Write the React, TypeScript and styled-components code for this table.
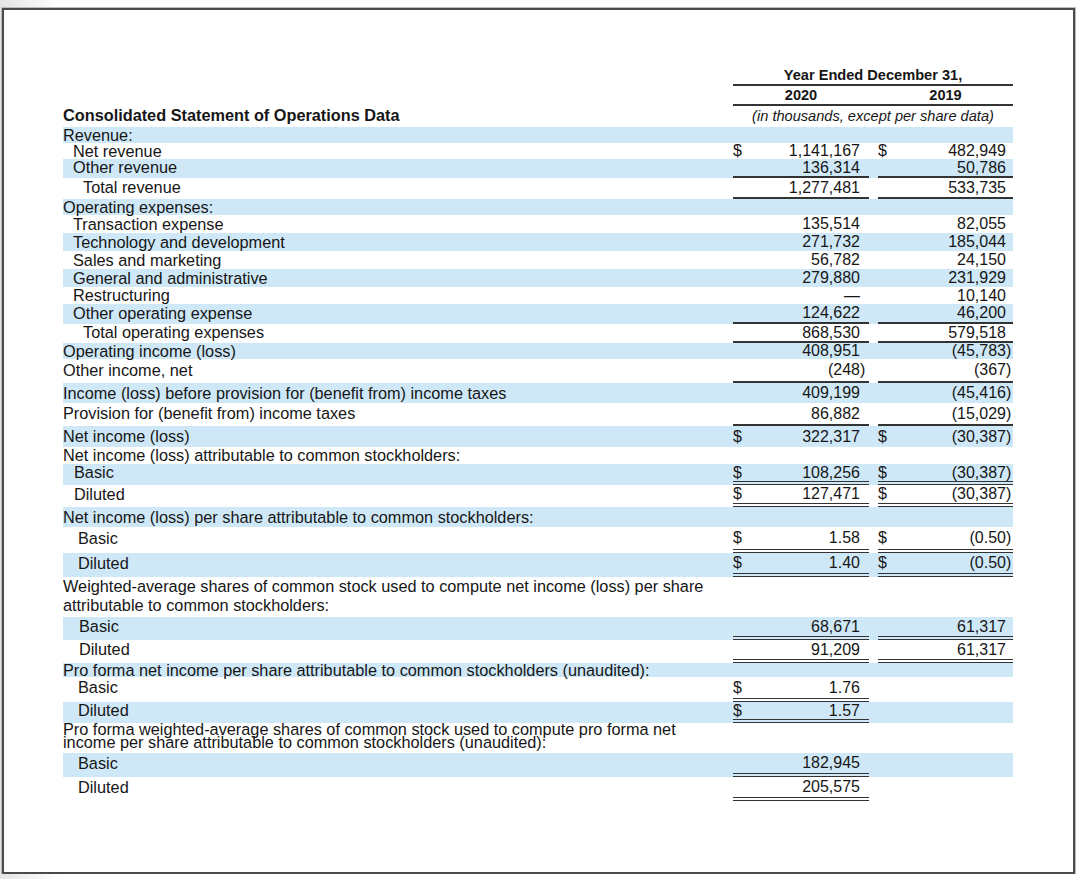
import React from "react";
import styled, { createGlobalStyle } from "styled-components";

const GlobalStyle = createGlobalStyle`
  html, body {
    margin: 0;
    padding: 0;
  }
  body {
    background: linear-gradient(to right, #e4e4e4 0px, #ffffff 60px);
    font-family: "Liberation Sans", Arial, sans-serif;
    color: #161616;
  }
`;

type Rule = "none" | "single" | "double";
type Cell = { v: string; neg?: boolean; dollar?: boolean };
type RowData = {
  label: string[];
  indent: number;
  h: number;
  lh?: number;
  rule?: Rule;
  a?: Cell;
  b?: Cell;
};

const COLS = "661px 136px 135px";
const BLUE = "#cfe8f8";
const RULE_COLOR = "#333";

const Frame = styled.div`
  box-sizing: border-box;
  width: 1073px;
  height: 866px;
  margin: 8px 0 0 2px;
  border: 2px solid #4a4a4a;
  box-shadow: 0 0 0 1px #bdbdbd;
  background: #fff;
  padding: 57px 0 0 59px;
`;

const Header = styled.div`
  display: grid;
  grid-template-columns: ${COLS};
  column-gap: 9px;
  width: 950px;
`;

const YearEnded = styled.div`
  grid-column: 2 / 4;
  grid-row: 1;
  text-align: center;
  font-weight: 700;
  font-size: 14.6px;
  line-height: 17px;
  border-bottom: 2px solid ${RULE_COLOR};
`;

const YearsRow = styled.div`
  grid-column: 2 / 4;
  grid-row: 2;
  display: grid;
  grid-template-columns: 136px 135px;
  column-gap: 9px;
  font-weight: 700;
  font-size: 14.6px;
  line-height: 18px;
  text-align: center;
  border-bottom: 2px solid ${RULE_COLOR};
`;

const Title = styled.div`
  grid-column: 1;
  grid-row: 3;
  align-self: start;
  font-weight: 700;
  font-size: 16.3px;
  line-height: 18px;
`;

const UnitNote = styled.div`
  grid-column: 2 / 4;
  grid-row: 3;
  text-align: center;
  font-style: italic;
  font-size: 14.6px;
  line-height: 21px;
`;

const Table = styled.div`
  display: flex;
  flex-direction: column;
  width: 950px;
`;

const Row = styled.div<{ $shaded: boolean }>`
  display: grid;
  grid-template-columns: ${COLS};
  column-gap: 9px;
  align-items: start;
  background: ${(p) => (p.$shaded ? BLUE : "transparent")};
  font-size: 16px;
`;

const Label = styled.div<{ $indent: number; $h: number; $lh: number }>`
  box-sizing: border-box;
  height: ${(p) => p.$h}px;
  padding-left: ${(p) => p.$indent}px;
  font-size: 16.3px;
  line-height: ${(p) => p.$lh}px;
  white-space: nowrap;
`;

const ruleCss = (r: Rule) =>
  r === "single"
    ? `border-bottom: 2px solid ${RULE_COLOR};`
    : r === "double"
    ? `border-bottom: 4px double ${RULE_COLOR};`
    : "";

const Amount = styled.div<{ $h: number; $rule: Rule; $pad: number }>`
  box-sizing: content-box;
  height: ${(p) => p.$h}px;
  line-height: ${(p) => p.$h}px;
  display: flex;
  justify-content: space-between;
  align-items: center;
  padding-right: ${(p) => p.$pad}px;
  ${(p) => ruleCss(p.$rule)}
`;

const Dollar = styled.span`
  display: inline-block;
`;

const Value = styled.span`
  display: inline-flex;
  white-space: nowrap;
`;

const Close = styled.span`
  display: inline-block;
  width: 6px;
  text-align: left;
`;

const AmountCell: React.FC<{ cell?: Cell; h: number; rule: Rule; pad: number }> = ({
  cell,
  h,
  rule,
  pad,
}) => {
  if (!cell) return <div />;
  return (
    <Amount $h={h} $rule={rule} $pad={pad}>
      <Dollar>{cell.dollar ? "$" : ""}</Dollar>
      <Value>
        {cell.neg ? `(${cell.v}` : cell.v}
        <Close>{cell.neg ? ")" : ""}</Close>
      </Value>
    </Amount>
  );
};

const rows: RowData[] = [
  { label: ["Revenue:"], indent: 0, h: 16 },
  { label: ["Net revenue"], indent: 10, h: 16, a: { v: "1,141,167", dollar: true }, b: { v: "482,949", dollar: true } },
  { label: ["Other revenue"], indent: 10, h: 17, rule: "single", a: { v: "136,314" }, b: { v: "50,786" } },
  { label: ["Total revenue"], indent: 20, h: 19, rule: "single", a: { v: "1,277,481" }, b: { v: "533,735" } },
  { label: ["Operating expenses:"], indent: 0, h: 16 },
  { label: ["Transaction expense"], indent: 10, h: 18, a: { v: "135,514" }, b: { v: "82,055" } },
  { label: ["Technology and development"], indent: 10, h: 18, a: { v: "271,732" }, b: { v: "185,044" } },
  { label: ["Sales and marketing"], indent: 10, h: 18, a: { v: "56,782" }, b: { v: "24,150" } },
  { label: ["General and administrative"], indent: 10, h: 18, a: { v: "279,880" }, b: { v: "231,929" } },
  { label: ["Restructuring"], indent: 10, h: 17, a: { v: "—" }, b: { v: "10,140" } },
  { label: ["Other operating expense"], indent: 10, h: 18, rule: "single", a: { v: "124,622" }, b: { v: "46,200" } },
  { label: ["Total operating expenses"], indent: 20, h: 17, rule: "single", a: { v: "868,530" }, b: { v: "579,518" } },
  { label: ["Operating income (loss)"], indent: 0, h: 16, a: { v: "408,951" }, b: { v: "45,783", neg: true } },
  { label: ["Other income, net"], indent: 0, h: 22, rule: "single", a: { v: "248", neg: true }, b: { v: "367", neg: true } },
  { label: ["Income (loss) before provision for (benefit from) income taxes"], indent: 0, h: 20, a: { v: "409,199" }, b: { v: "45,416", neg: true } },
  { label: ["Provision for (benefit from) income taxes"], indent: 0, h: 21, rule: "single", a: { v: "86,882" }, b: { v: "15,029", neg: true } },
  { label: ["Net income (loss)"], indent: 0, h: 21, a: { v: "322,317", dollar: true }, b: { v: "30,387", neg: true, dollar: true } },
  { label: ["Net income (loss) attributable to common stockholders:"], indent: 0, h: 17 },
  { label: ["Basic"], indent: 11, h: 17, rule: "double", a: { v: "108,256", dollar: true }, b: { v: "30,387", neg: true, dollar: true } },
  { label: ["Diluted"], indent: 11, h: 18, rule: "double", a: { v: "127,471", dollar: true }, b: { v: "30,387", neg: true, dollar: true } },
  { label: ["Net income (loss) per share attributable to common stockholders:"], indent: 0, h: 20 },
  { label: ["Basic"], indent: 15, h: 22, rule: "double", a: { v: "1.58", dollar: true }, b: { v: "0.50", neg: true, dollar: true } },
  { label: ["Diluted"], indent: 15, h: 20, rule: "double", a: { v: "1.40", dollar: true }, b: { v: "0.50", neg: true, dollar: true } },
  {
    label: [
      "Weighted-average shares of common stock used to compute net income (loss) per share",
      "attributable to common stockholders:",
    ],
    indent: 0,
    h: 40,
    lh: 19,
  },
  { label: ["Basic"], indent: 16, h: 19, rule: "double", a: { v: "68,671" }, b: { v: "61,317" } },
  { label: ["Diluted"], indent: 16, h: 19, rule: "double", a: { v: "91,209" }, b: { v: "61,317" } },
  { label: ["Pro forma net income per share attributable to common stockholders (unaudited):"], indent: 0, h: 14 },
  { label: ["Basic"], indent: 15, h: 21, rule: "double", a: { v: "1.76", dollar: true } },
  { label: ["Diluted"], indent: 15, h: 17, rule: "double", a: { v: "1.57", dollar: true } },
  {
    label: [
      "Pro forma weighted-average shares of common stock used to compute pro forma net",
      "income per share attributable to common stockholders (unaudited):",
    ],
    indent: 0,
    h: 30,
    lh: 13,
  },
  { label: ["Basic"], indent: 15, h: 20, rule: "double", a: { v: "182,945" } },
  { label: ["Diluted"], indent: 15, h: 20, rule: "double", a: { v: "205,575" } },
];

const ruleWidth = (r: Rule) => (r === "single" ? 2 : r === "double" ? 4 : 0);

export default function App() {
  return (
    <>
      <GlobalStyle />
      <Frame>
        <Header>
          <YearEnded>Year Ended December 31,</YearEnded>
          <YearsRow>
            <span>2020</span>
            <span>2019</span>
          </YearsRow>
          <Title>Consolidated Statement of Operations Data</Title>
          <UnitNote>(in thousands, except per share data)</UnitNote>
        </Header>
        <Table>
          {rows.map((r, i) => {
            const rule = r.rule ?? "none";
            const hasAmounts = !!(r.a || r.b);
            const labelH = r.h + (hasAmounts ? ruleWidth(rule) : 0);
            return (
              <Row key={i} $shaded={i % 2 === 0}>
                <Label $indent={r.indent} $h={labelH} $lh={r.lh ?? r.h}>
                  {r.label.map((t, j) => (
                    <React.Fragment key={j}>
                      {j > 0 && <br />}
                      {t}
                    </React.Fragment>
                  ))}
                </Label>
                <AmountCell cell={r.a} h={r.h} rule={rule} pad={3} />
                <AmountCell cell={r.b} h={r.h} rule={rule} pad={1} />
              </Row>
            );
          })}
        </Table>
      </Frame>
    </>
  );
}
